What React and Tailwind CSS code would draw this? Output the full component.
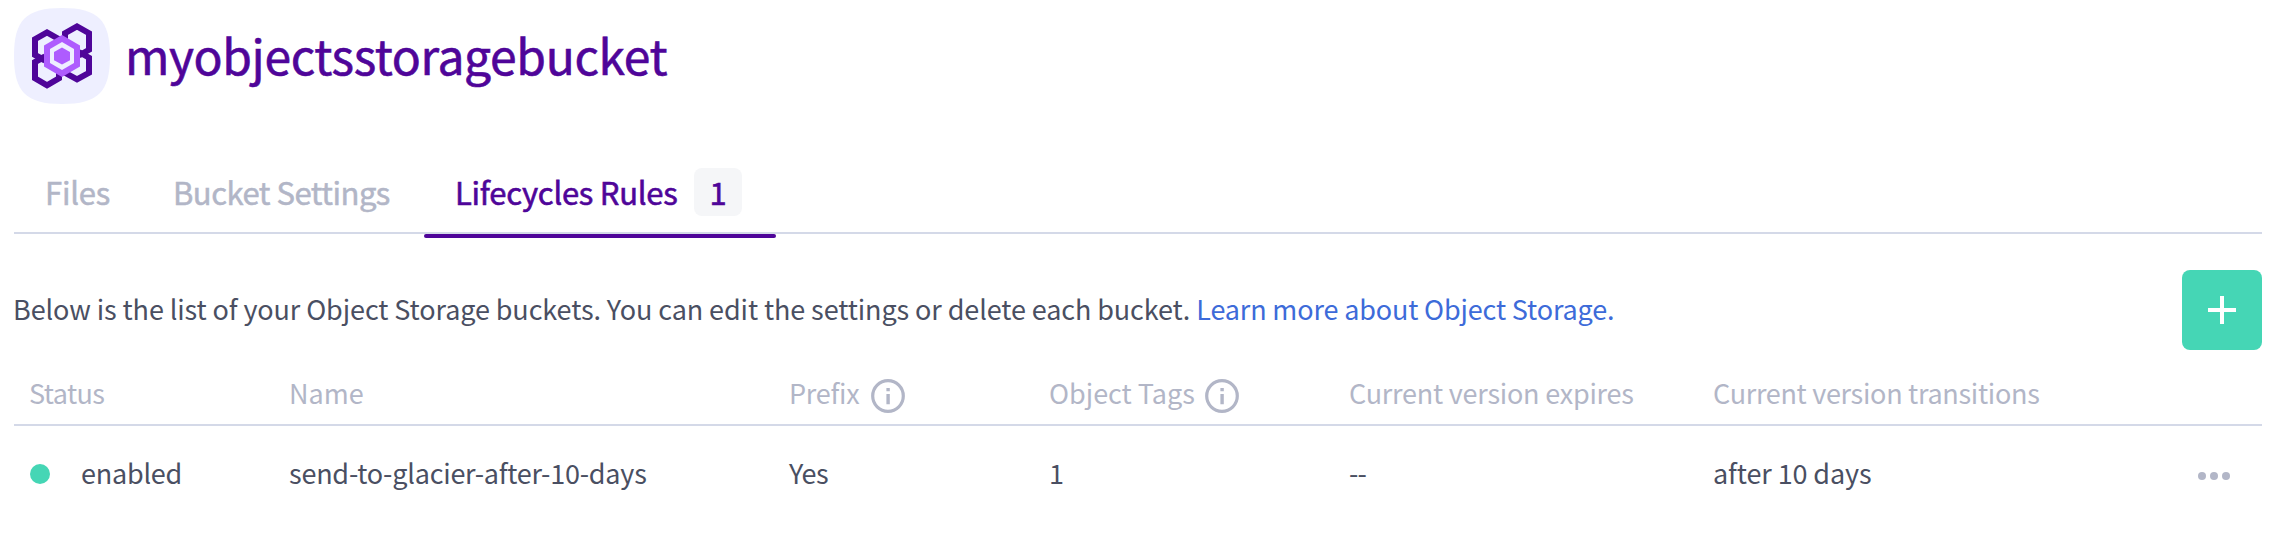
function BucketLogo() {
  return (
    <svg className="size-24 shrink-0" viewBox="14 8 96 96" aria-hidden="true">
      <path d="M62 8C98 8 110 20 110 56S98 104 62 104S14 92 14 56S26 8 62 8Z" fill="#eeefff" />
      <g fill="none" stroke="#4f0599" strokeWidth="6" strokeMiterlimit="10">
        <path d="M45 60.5L35 55V39.2L47 32.4L59 39.2V45" />
        <path d="M45 56.5L35 62V78.3L47 85.3L59 78.3V70" />
        <path d="M65 45V33.2L77 26.5L89 33.2V49.8L79 55.5" />
        <path d="M79 52L89 57.7V72.8L77 79.4L65 72.8V68" />
      </g>
      <path d="M62 35L80 45.5V66.5L62 77L44 66.5V45.5Z" fill="#ae5cfe" />
      <path d="M62 42L74 49V63L62 70L50 63V49Z" fill="#eeefff" />
      <path d="M62 47.6L70 52V60.2L62 64.5L54 60.2V52Z" fill="#ae5cfe" />
    </svg>
  );
}

function InfoIcon() {
  return (
    <svg className="mt-[6px] size-[34px] shrink-0" viewBox="0 0 34 34" aria-hidden="true">
      <circle cx="17" cy="17" r="15.3" fill="none" stroke="#b2b6c7" strokeWidth="3.2" />
      <path d="M15.4 9h3.4v3.2h-3.4zM15.4 15h3.4v10.2h-3.4z" fill="#b2b6c7" />
    </svg>
  );
}

const row = "grid grid-cols-[260px_500px_260px_300px_364px_485px_1fr] items-center pl-[15px]";

export default function App() {
  return (
    <main className="h-[536px] w-[2280px] overflow-hidden bg-white pt-2 pr-[18px] pl-[14px] font-['Noto_Sans_CJK_SC',sans-serif] text-[27px] leading-10 whitespace-nowrap text-[#4a4f62]">
      <header className="flex h-24 items-center">
        <BucketLogo />
        <h1 className="pb-1 pl-[15px] text-[48px] leading-[60px] tracking-[-0.35px] text-[#4f0599] [-webkit-text-stroke:0.6px_#4f0599]">
          myobjectsstoragebucket
        </h1>
      </header>

      <nav className="mt-16 flex h-[66px] items-start border-b-2 border-[#d4d9e8] text-[31px] leading-[47px] text-[#b2b6c7]">
        <a className="w-[93px] shrink-0 pl-[31px] tracking-[-0.2px] [-webkit-text-stroke:0.5px_#b2b6c7]">Files</a>
        <a className="w-[317px] shrink-0 pl-[66px] tracking-[-0.5px] [-webkit-text-stroke:0.5px_#b2b6c7]">Bucket Settings</a>
        <a className="flex h-[70px] w-[352px] shrink-0 flex-col justify-between text-[#4f0599]">
          <span className="flex pl-[31px] tracking-[-0.25px] [-webkit-text-stroke:0.6px_#4f0599]">
            Lifecycles Rules
            <span className="mr-[34px] ml-auto h-12 w-12 rounded-lg bg-[#f5f6f8] text-center">1</span>
          </span>
          <span className="h-1 rounded-sm bg-[#4f0599]" />
        </a>
      </nav>

      <section className="mt-9 flex h-20 items-center justify-between">
        <p className="-ml-px pb-0.5 tracking-[-0.1px]">
          Below is the list of your Object Storage buckets. You can edit the settings or delete each bucket.{" "}
          <a className="tracking-[-0.15px] text-[#3d6bd9]">Learn more about Object Storage.</a>
        </p>
        <button className="flex size-20 items-center justify-center rounded-lg bg-[#45d6b5]" aria-label="Add rule">
          <svg className="size-7" viewBox="0 0 28 28" aria-hidden="true">
            <path d="M14 0v28M0 14h28" stroke="#fff" strokeWidth="4" />
          </svg>
        </button>
      </section>

      <div className={`${row} h-[76px] border-b-2 border-[#d4d9e8] pt-3 tracking-[-0.23px] text-[#b2b6c7]`}>
        <span className="tracking-[-0.6px]">Status</span>
        <span className="tracking-normal">Name</span>
        <span className="flex h-10 gap-[11px]">
          Prefix
          <InfoIcon />
        </span>
        <span className="flex h-10 gap-[10px] tracking-normal">
          Object Tags
          <InfoIcon />
        </span>
        <span>Current version expires</span>
        <span className="tracking-[-0.3px]">Current version transitions</span>
      </div>

      <div className={`${row} h-24 pb-0.5 tracking-[-0.23px]`}>
        <span className="flex">
          <span className="mt-[11px] ml-px size-5 rounded-full bg-[#45d6b5]" />
          <span className="ml-[31px]">enabled</span>
        </span>
        <span>send-to-glacier-after-10-days</span>
        <span className="tracking-[-0.5px]">Yes</span>
        <span>1</span>
        <span className="tracking-[-0.8px]">--</span>
        <span className="tracking-[-0.1px]">after 10 days</span>
        <svg className="mt-1.5 h-2 w-8" viewBox="0 0 32 8" fill="#b2b6c7" aria-label="More actions">
          <circle cx="4" cy="4" r="4" />
          <circle cx="16" cy="4" r="4" />
          <circle cx="28" cy="4" r="4" />
        </svg>
      </div>
    </main>
  );
}
